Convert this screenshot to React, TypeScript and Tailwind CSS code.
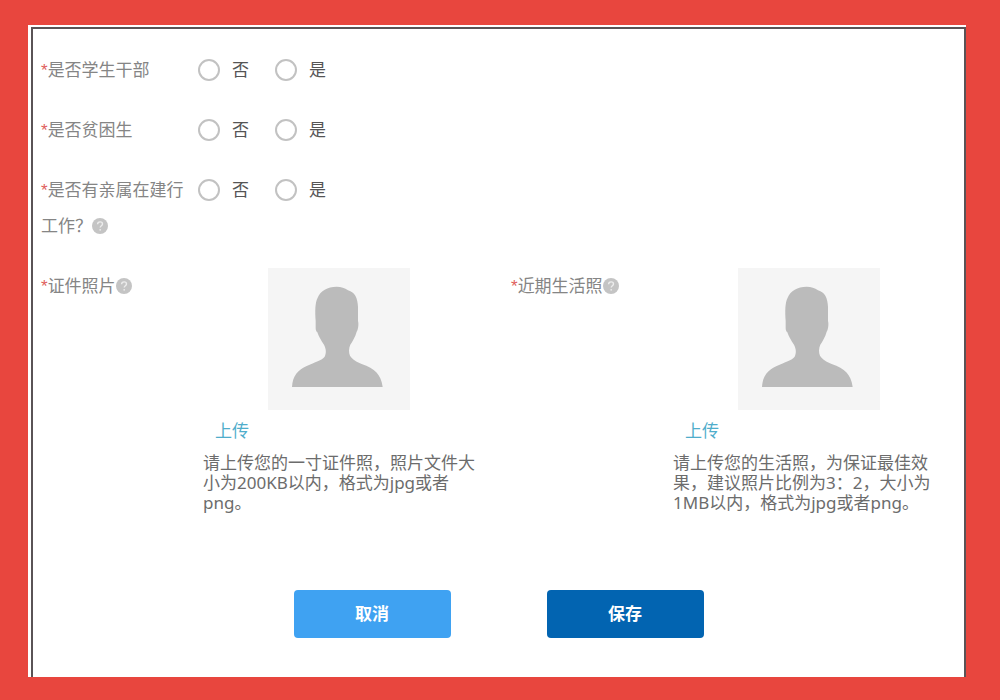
import React, { useState } from 'react';

type YesNoRowProps = {
  name: string;
  label: string;
  hint?: boolean;
};

type PhotoFieldProps = {
  label: string;
  tip: string;
};

const options = [
  { value: "no", text: "否" },
  { value: "yes", text: "是" },
];

const HintIcon = () => (
  <svg
    viewBox="0 0 16 16"
    className="inline-block w-4 h-4 align-[-2px]"
    fill="none"
    aria-hidden="true"
  >
    <circle cx="8" cy="8" r="8" fill="#c4c4c4" />
    <path
      d="M5.6 6.3C5.6 4.7 6.7 3.9 8.1 3.9c1.4 0 2.4.8 2.4 2.1 0 1.7-2.3 1.8-2.3 3.6"
      stroke="#ececec"
      strokeWidth="1.4"
    />
    <circle cx="8.2" cy="11.8" r="0.9" fill="#ececec" />
  </svg>
);

const FieldLabel = ({ label, hint }: { label: string; hint?: boolean }) => (
  <>
    <span className="leading-none font-['Liberation_Sans',sans-serif] text-[#e0605c]">*</span>
    {label}
    {hint && <HintIcon />}
  </>
);

const YesNoRow = ({ name, label, hint }: YesNoRowProps) => {
  const [value, setValue] = useState("");

  return (
    <fieldset className="py-3" aria-label={label}>
      <div className="flex items-start">
        <div className="w-[157px] shrink-0 pr-2 leading-9 text-[#858585]">
          <FieldLabel label={label} hint={hint} />
        </div>
        <div className="flex h-9 items-center gap-[26px]">
          {options.map((option) => (
            <label
              key={option.value}
              className="flex items-center gap-3 text-[#555555]"
            >
              <input
                type="radio"
                name={name}
                value={option.value}
                checked={value === option.value}
                onChange={(e) => setValue(e.target.value)}
                className="w-[22px] h-[22px] appearance-none rounded-full border-2 border-[#c2c2c2] bg-white checked:border-[#3fa2f2] checked:border-[6px]"
              />
              <span>{option.text}</span>
            </label>
          ))}
        </div>
      </div>
    </fieldset>
  );
};

const Avatar = () => (
  <svg viewBox="24 21 426 426" className="w-[142px] h-[142px] bg-[#f5f5f5]" aria-hidden="true">
    <path
      d="M96 378C98 343 115 326 140 315C165 303 186 298 194 287C200 276 198 262 192 251C183 238 176 226 172 214C168 210 167 206 167 200L167 180C165 150 165 125 173 110C182 88 202 78 230 77C244 77 254 81 264 88C285 94 293 112 294 138L294 180C297 190 294 208 290 212C286 227 278 240 271 251C266 262 266 274 270 284C278 297 292 303 305 309C345 323 363 340 368 378Z"
      fill="#bbbbbb"
    />
  </svg>
);

const PhotoField = ({ label, tip }: PhotoFieldProps) => (
  <div className="flex items-start">
    <div className="w-[162px] shrink-0 leading-9 text-[#858585]">
      <FieldLabel label={label} hint />
    </div>
    <div className="min-w-0 flex-1">
      <div className="flex justify-center">
        <Avatar />
      </div>
      <button
        type="button"
        className="mt-[9px] ml-3 block leading-6 text-[#4fadcb] hover:underline"
        aria-label={`上传${label}`}
      >
        上传
      </button>
      <p className="mt-[10px] leading-5 text-[#6c6c6c]">{tip}</p>
    </div>
  </div>
);

const App = () => {
  return (
    <div className="min-h-screen bg-[#e8463e] pt-[25px] pr-[34px] pb-[23px] pl-7">
      <div className="bg-white pt-[2px] pl-[3px]">
        <form
          className="border-t-2 border-x-2 border-[#5a5356] bg-white pt-[11px] pb-[39px] text-[17px] font-['Noto_Sans','Noto_Sans_CJK_SC',sans-serif]"
          onSubmit={(e) => e.preventDefault()}
        >
          <div className="pr-[19px] pl-2">
            <YesNoRow name="cadre" label="是否学生干部" />
            <YesNoRow name="poor" label="是否贫困生" />
            <YesNoRow name="relative" label="是否有亲属在建行工作？" hint />

            <div className="grid grid-cols-2 gap-9 pt-3">
              <PhotoField
                label="证件照片"
                tip="请上传您的一寸证件照，照片文件大小为200KB以内，格式为jpg或者png。"
              />
              <PhotoField
                label="近期生活照"
                tip="请上传您的生活照，为保证最佳效果，建议照片比例为3：2，大小为1MB以内，格式为jpg或者png。"
              />
            </div>
          </div>

          <div className="mt-[77px] flex justify-center gap-24 font-bold text-white">
            <button
              type="button"
              className="h-12 w-[157px] rounded bg-[#3fa2f2] hover:bg-[#3595e2]"
            >
              取消
            </button>
            <button
              type="submit"
              className="h-12 w-[157px] rounded bg-[#0264b1] hover:bg-[#02589c]"
            >
              保存
            </button>
          </div>
        </form>
      </div>
    </div>
  );
};

export default App;
